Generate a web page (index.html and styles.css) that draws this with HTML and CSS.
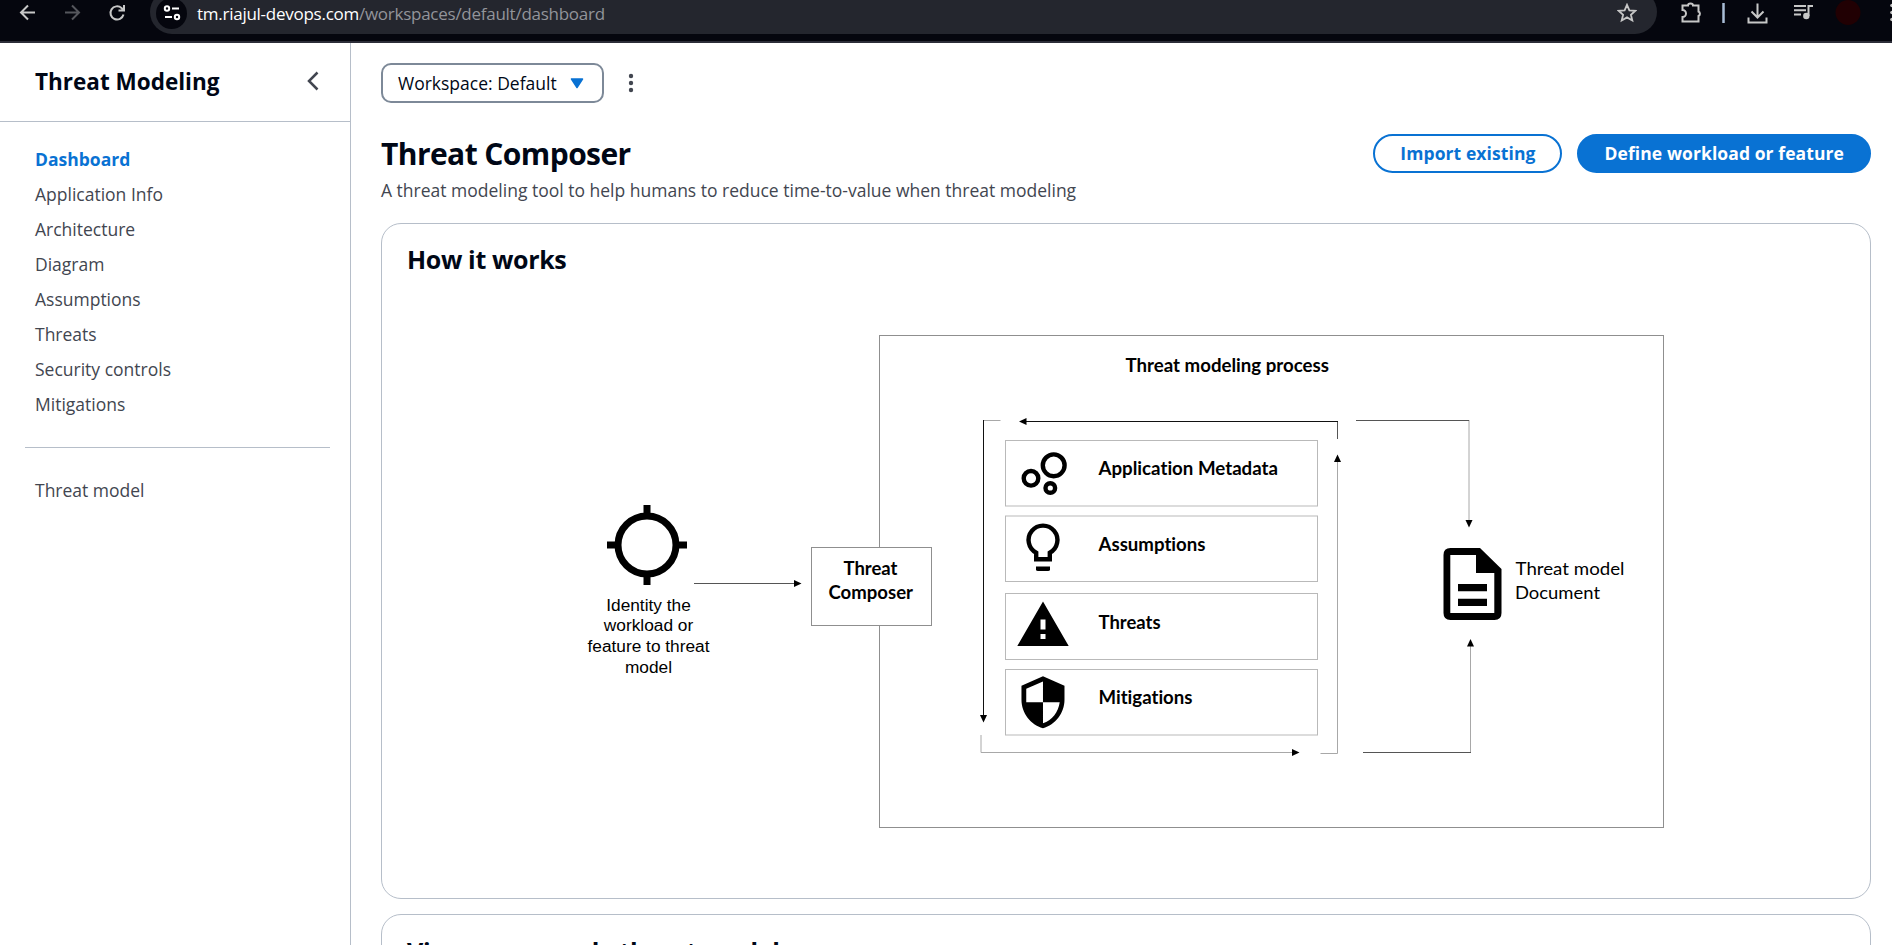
FILE: index.html
```html
<!DOCTYPE html>
<html lang="en">
<head>
<meta charset="utf-8">
<title>Threat Composer</title>
<link rel="stylesheet" href="styles.css">
</head>
<body>
<div class="browser">
  <svg class="nav-icons" width="140" height="41" viewBox="0 0 140 41">
    <path class="ico" d="M35 12.500H21.500M28 5.500l-7 7 7 7"/>
    <path class="ico dim" d="M65 12.500H78.500M72 5.500l7 7-7 7"/>
    <path class="ico" d="M123.500 14.500A6.600 6.600 0 1 1 121.500 8L124 10.500M124 5V10.500H118.500"/>
  </svg>
  <div class="address">
    <span class="site"><svg width="18" height="18" viewBox="0 0 18 18"><g fill="none" stroke="#fff" stroke-width="2"><circle cx="4" cy="4.500" r="2.200"/><path d="M9 4.500H16M2 13H9"/><circle cx="14" cy="13" r="2.200"/></g></svg></span>
    <span class="url"><span class="host">tm.riajul-devops.com</span>/workspaces/default/dashboard</span>
    <svg class="star" width="20" height="20" viewBox="0 0 20 20"><path d="M10 1.800l2.400 5.500 6 .5-4.500 3.900 1.400 5.800L10 14.400l-5.300 3.100 1.400-5.800L1.600 7.800l6-.5z" fill="none" stroke="#c7c7c7" stroke-width="1.800"/></svg>
  </div>
  <svg class="tools" width="235" height="41" viewBox="1657 0 235 41">
    <path d="M1682.500 5.500H1688A2.500 2 0 0 1 1693 5.500H1698.500V11.500A2.500 2.500 0 0 1 1698.500 16V21.500H1682.500V17A3.500 3.500 0 0 0 1682.500 10Z" class="ico"/>
    <path d="M1723.500 3V23" stroke="#a9bdd6" stroke-width="2.500"/>
    <path class="ico" d="M1757.500 3.500V17M1751.500 11.500l6 6 6-6M1748.500 17.500V22.500H1766.500V17.500"/>
    <path class="ico" d="M1794 6H1806M1794 10.200H1806M1794 14.500H1801M1808.500 16V6H1813"/>
    <circle cx="1806.300" cy="16" r="3.200" fill="#c7c7c7"/>
    <circle cx="1848" cy="12.500" r="12.500" fill="#210003"/>
    <g fill="#c7c7c7"><circle cx="1892" cy="5.500" r="1.800"/><circle cx="1892" cy="12.500" r="1.800"/><circle cx="1892" cy="19.500" r="1.800"/></g>
  </svg>
</div>
<div class="app">
  <nav class="sidebar">
    <div class="side-head">
      <span>Threat Modeling</span>
      <svg width="12" height="20" viewBox="0 0 12 20"><path d="M10.500 1.500L2 10l8.500 8.500" fill="none" stroke="#424650" stroke-width="2.500"/></svg>
    </div>
    <ul class="links">
      <li class="active">Dashboard</li>
      <li>Application Info</li>
      <li>Architecture</li>
      <li>Diagram</li>
      <li>Assumptions</li>
      <li>Threats</li>
      <li>Security controls</li>
      <li>Mitigations</li>
    </ul>
    <hr class="rule">
    <ul class="links last"><li>Threat model</li></ul>
  </nav>
  <main class="main">
    <div class="toolbar">
      <button class="select">Workspace: Default<svg width="14" height="11" viewBox="0 0 14 11"><path d="M1.500 1h11L7 9.500z" fill="#0972d3" stroke="#0972d3" stroke-width="1.500" stroke-linejoin="round"/></svg></button>
      <svg class="kebab" width="6" height="20" viewBox="0 0 6 20"><g fill="#424650"><circle cx="3" cy="3" r="2.200"/><circle cx="3" cy="10" r="2.200"/><circle cx="3" cy="17" r="2.200"/></g></svg>
    </div>
    <header class="page-head">
      <h1>Threat Composer</h1>
      <div class="actions">
        <button class="btn">Import existing</button>
        <button class="btn primary">Define workload or feature</button>
      </div>
    </header>
    <p class="lead">A threat modeling tool to help humans to reduce time-to-value when threat modeling</p>
    <section class="card how">
      <h2>How it works</h2>
      <svg class="diagram" width="1488" height="560" viewBox="382 300 1488 560">
        <g fill="none" stroke="#8f8f8f" stroke-width="1">
          <rect x="879.500" y="335.500" width="784" height="492"/>
          <rect x="811.500" y="547.500" width="120" height="78" fill="#fff"/>
        </g>
        <g fill="none" stroke="#b9b9b9" stroke-width="1">
          <rect x="1005.500" y="440.500" width="312" height="65.500"/>
          <rect x="1005.500" y="516" width="312" height="65.500"/>
          <rect x="1005.500" y="593.500" width="312" height="66"/>
          <rect x="1005.500" y="669.500" width="312" height="65.500"/>
        </g>
        <g fill="none" stroke="#a8a8a8">
          <path d="M984 420.500H1000.500M1337.500 460V753.500H1320.500M981 735V752.500H1294M1469 420V522M1470.500 752V644"/>
        </g>
        <g fill="none" stroke="#555">
          <path d="M694 583.500H796M1337.500 421V439M1356 420.500H1469M1363 752.500H1471"/>
        </g>
        <path d="M983.500 420V717M1024 421.500H1338" fill="none" stroke="#111"/>
        <g>
          <path d="M801.500 583.500l-7.500-3.500v7z"/>
          <path d="M983.500 722.500l-3.500-7.500h7z"/>
          <path d="M1019 421.500l7.500-3.500v7z"/>
          <path d="M1337.500 454.500l-3.500 7.500h7z"/>
          <path d="M1299.500 752.500l-7.500-3.500v7z"/>
          <path d="M1469 527.500l-3.500-7.500h7z"/>
          <path d="M1470.500 639l-3.500 7.500h7z"/>
        </g>
        <!-- crosshair -->
        <g fill="none" stroke="#000" stroke-width="7">
          <circle cx="647" cy="545" r="29"/>
          <path d="M647 505V516M647 574V585M607 545H618M676 545H687"/>
        </g>
        <!-- bubbles and bulb -->
        <g fill="none" stroke="#000" stroke-width="4.400">
          <circle cx="1053.700" cy="465.300" r="10.900"/>
          <circle cx="1031" cy="478.300" r="7.300"/>
          <circle cx="1050.300" cy="488" r="4.800"/>
          <path d="M1036.200 559.300V552.700A14.400 14.400 0 1 1 1049.800 552.700V559.300Z"/>
        </g>
        <path d="M1036 566.500H1050V569.500Q1050 571 1048 571H1038Q1036 571 1036 569.500Z"/>
        <path fill-rule="evenodd" d="M1043 601.500L1068.700 646H1017.300ZM1040.500 619.500V629.500H1045.500V619.500ZM1040.500 634V639H1045.500V634Z"/>
        <path transform="translate(1014.300 673.900) scale(2.390 2.360)" d="M12 1L3 5v6c0 5.550 3.840 10.740 9 12 5.160-1.260 9-6.450 9-12V5l-9-4zm0 10.990h7c-.53 4.120-3.280 7.790-7 8.940V12H5V6.300l7-3.110v8.800z"/>
        <!-- document -->
        <path fill-rule="evenodd" d="M1450.500 548H1480L1501.500 569V613Q1501.500 620 1494.500 620H1450.500Q1443.500 620 1443.500 613V555Q1443.500 548 1450.500 548ZM1450.300 555V613H1494.300V573H1476V555ZM1458 584H1487V591.300H1458ZM1458 598.700H1487V606H1458Z"/>
        <g class="arial" text-anchor="middle">
          <text x="648.500" y="611">Identity the</text>
          <text x="648.500" y="631">workload or</text>
          <text x="648.500" y="652">feature to threat</text>
          <text x="648.500" y="673">model</text>
        </g>
        <g class="lato bold">
          <text x="843.500" y="574.500" textLength="54" lengthAdjust="spacingAndGlyphs">Threat</text>
          <text x="828.500" y="598.500" textLength="84.500" lengthAdjust="spacingAndGlyphs">Composer</text>
          <text x="1125.500" y="372.300" textLength="203.500" lengthAdjust="spacingAndGlyphs">Threat modeling process</text>
          <text x="1098.500" y="475.300" textLength="179.500" lengthAdjust="spacingAndGlyphs">Application Metadata</text>
          <text x="1098.500" y="550.700" textLength="107" lengthAdjust="spacingAndGlyphs">Assumptions</text>
          <text x="1098.500" y="628.600" textLength="62" lengthAdjust="spacingAndGlyphs">Threats</text>
          <text x="1098.500" y="704.300" textLength="94" lengthAdjust="spacingAndGlyphs">Mitigations</text>
        </g>
        <g class="lato">
          <text x="1515.500" y="575" textLength="109" lengthAdjust="spacingAndGlyphs">Threat model</text>
          <text x="1515" y="598.500" textLength="85" lengthAdjust="spacingAndGlyphs">Document</text>
        </g>
      </svg>
    </section>
    <section class="card example">
      <h2>View an example threat model</h2>
    </section>
  </main>
</div>
</body>
</html>
```
FILE: styles.css
```css
* { box-sizing: border-box; }
body {
  margin: 0;
  height: 945px;
  overflow: hidden;
  display: flex;
  flex-direction: column;
  background: #fff;
  color: #000716;
  font: 17.5px/25px "Open Sans", sans-serif;
}
h1, h2, p, ul { margin: 0; padding: 0; }
ul { list-style: none; }
svg { display: block; flex: none; }
button { font: inherit; margin: 0; }

.browser {
  flex: none;
  display: flex;
  height: 43px;
  overflow: hidden;
  background: #05060e;
  border-bottom: 2px solid #2c2d38;
}
.ico { fill: none; stroke: #c7c7c7; stroke-width: 2; }
.dim { stroke: #55565c; }
.nav-icons { margin-right: 10px; }
.address {
  width: 1507px;
  height: 44px;
  margin-top: -10px;
  padding: 2px 20px 0 6px;
  display: flex;
  align-items: center;
  background: #24262e;
  border-radius: 22px;
}
.site {
  width: 31px;
  height: 31px;
  display: flex;
  align-items: center;
  justify-content: center;
  background: #05060e;
  border-radius: 50%;
}
.url {
  flex: 1;
  margin-left: 10px;
  color: #92949a;
  font-size: 17px;
  letter-spacing: -0.26px;
  white-space: nowrap;
}
.host { color: #fff; }

.app { flex: 1; min-height: 0; display: flex; }
.sidebar {
  flex: none;
  width: 351px;
  border-right: 1px solid #b6bec9;
}
.side-head {
  height: 79px;
  padding: 0 31px 2px 35px;
  display: flex;
  align-items: center;
  justify-content: space-between;
  border-bottom: 1px solid #b6bec9;
  font-size: 22.5px;
  font-weight: 700;
}
.links { padding: 20px 35px 0; color: #424650; }
.links li { height: 35px; line-height: 35px; }
.links .active { color: #0972d3; font-weight: 700; }
.rule {
  width: 305px;
  margin: 25px 0 0 25px;
  border: 0;
  border-top: 1px solid #b6bec9;
}
.links.last { padding-top: 25px; }

.main { flex: 1; min-height: 0; overflow: hidden; padding: 20px 21px 0 30px; }
.toolbar { display: flex; align-items: center; height: 40px; }
.select {
  width: 223px;
  height: 40px;
  padding: 0 18px 0 15px;
  display: flex;
  align-items: center;
  justify-content: space-between;
  background: #fff;
  border: 2px solid #7d8998;
  border-radius: 10px;
  color: #000716;
}
.kebab { margin-left: 24px; }
.page-head {
  display: flex;
  align-items: center;
  justify-content: space-between;
  margin-top: 31px;
  height: 39px;
}
h1 { font-size: 30px; line-height: 38px; letter-spacing: -0.58px; }
.actions { display: flex; gap: 15px; }
.btn {
  height: 39px;
  padding: 0 25px;
  border: 2px solid #0972d3;
  border-radius: 20px;
  background: #fff;
  color: #0972d3;
  font-weight: 700;
  letter-spacing: 0.09px;
}
.btn.primary { background: #0972d3; color: #fff; }
.lead { margin-top: 5px; color: #424650; }
.card { border: 1px solid #b6bec9; border-radius: 20px; }
h2 { font-size: 25px; line-height: 30px; padding-left: 25px; letter-spacing: -0.35px; }
.how { margin-top: 20px; height: 676px; padding-top: 20px; }
.diagram { margin-top: 26px; }
.lato { font-family: Lato, sans-serif; font-size: 18px; font-variant-ligatures: none; }
.bold { font-weight: 700; }
.arial { font-family: "Liberation Sans", sans-serif; font-size: 17.3px; }
.example { margin-top: 15px; height: 120px; padding-top: 21px; }
```
